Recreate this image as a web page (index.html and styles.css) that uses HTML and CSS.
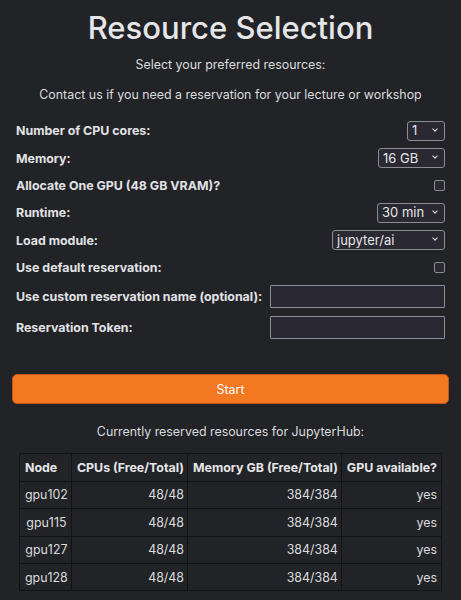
FILE: index.html
```html
<!DOCTYPE html>
<html>
<head>
<meta charset="utf-8">
<link rel="stylesheet" href="styles.css">
</head>
<body>
<div class="page">
  <h1 class="title">Resource Selection</h1>
  <p class="sub">Select your preferred resources:</p>
  <p class="sub contact">Contact us if you need a reservation for your lecture or workshop</p>
  <div class="form">
    <div class="row"><span class="label">Number of CPU cores:</span><span class="select w-cpu">1<span class="chev"></span></span></div>
    <div class="row"><span class="label">Memory:</span><span class="select w-mem">16 GB<span class="chev"></span></span></div>
    <div class="row"><span class="label">Allocate One GPU (48 GB VRAM)?</span><span class="check"></span></div>
    <div class="row"><span class="label">Runtime:</span><span class="select w-run">30 min<span class="chev"></span></span></div>
    <div class="row"><span class="label">Load module:</span><span class="select w-mod">jupyter/ai<span class="chev"></span></span></div>
    <div class="row"><span class="label">Use default reservation:</span><span class="check"></span></div>
    <div class="row tall"><span class="label">Use custom reservation name (optional):</span><span class="input"></span></div>
    <div class="row tall"><span class="label">Reservation Token:</span><span class="input"></span></div>
  </div>
  <div class="button">Start</div>
  <p class="sub reserved">Currently reserved resources for JupyterHub:</p>
  <table class="nodes">
    <thead>
      <tr><th>Node</th><th>CPUs (Free/Total)</th><th>Memory GB (Free/Total)</th><th>GPU available?</th></tr>
    </thead>
    <tbody>
      <tr><td>gpu102</td><td class="num">48/48</td><td class="num">384/384</td><td class="num">yes</td></tr>
      <tr><td>gpu115</td><td class="num">48/48</td><td class="num">384/384</td><td class="num">yes</td></tr>
      <tr><td>gpu127</td><td class="num">48/48</td><td class="num">384/384</td><td class="num">yes</td></tr>
      <tr><td>gpu128</td><td class="num">48/48</td><td class="num">384/384</td><td class="num">yes</td></tr>
    </tbody>
  </table>
</div>
</body>
</html>
```
FILE: styles.css
```css
html, body {
  margin: 0;
  padding: 0;
  background: #212327;
  color: #e4e4e6;
  font-family: Inter, "Noto Sans", sans-serif;
}
.page {
  padding: 0 12px;
}
.title {
  margin: 0;
  padding-top: 10px;
  text-align: center;
  font-size: 31px;
  font-weight: 500;
  line-height: 36px;
  color: #e6e6e8;
}
.sub {
  margin: 0;
  text-align: center;
  font-size: 12.4px;
  line-height: 16px;
  color: #dcdcde;
}
.title + .sub {
  margin-top: 11px;
}
.contact {
  margin-top: 14px;
}
.form {
  margin-top: 14px;
  padding: 0 4px;
  display: flex;
  flex-direction: column;
}
.row {
  display: flex;
  align-items: center;
  justify-content: space-between;
  height: 27.4px;
}
.row.tall {
  height: 30.5px;
}
.label {
  font-size: 12.4px;
  font-weight: 700;
  color: #e2e2e4;
  white-space: nowrap;
}
.select {
  box-sizing: border-box;
  height: 20px;
  border: 1.5px solid #8c8c92;
  border-radius: 3px;
  background: #2a2932;
  font-size: 13px;
  line-height: 17px;
  padding-left: 4px;
  display: flex;
  align-items: center;
  position: relative;
  color: #e6e6e8;
}
.chev {
  position: absolute;
  right: 7px;
  top: 5px;
  width: 3px;
  height: 3px;
  border-right: 1.5px solid #e0e0e0;
  border-bottom: 1.5px solid #e0e0e0;
  transform: rotate(45deg);
}
.w-cpu { width: 38px; }
.w-mem { width: 67px; }
.w-run { width: 68px; }
.w-mod { width: 113px; }
.check {
  box-sizing: border-box;
  width: 11px;
  height: 11px;
  border: 1.5px solid #8c8c92;
  border-radius: 2px;
  background: #2a2932;
}
.input {
  box-sizing: border-box;
  width: 175px;
  height: 23px;
  border: 1.5px solid #8c8c92;
  border-radius: 1px;
  background: #2a2833;
}
.button {
  margin-top: 32px;
  box-sizing: border-box;
  height: 30px;
  background: #f47722;
  border: 1px solid #c0561a;
  border-radius: 5px;
  color: #fff;
  font-size: 12.4px;
  display: flex;
  align-items: center;
  justify-content: center;
}
.reserved {
  margin-top: 20px;
}
.nodes {
  margin: 13px auto 0;
  border-collapse: collapse;
  font-size: 12.4px;
  color: #dcdcde;
}
.nodes th, .nodes td {
  border: 1.5px solid #121315;
  height: 26.4px;
  padding: 0 3.5px 0 4.5px;
  text-align: left;
  white-space: nowrap;
}
.nodes th {
  font-weight: 700;
  color: #e6e6e8;
}
.nodes td {
  text-align: center;
}
.nodes td.num {
  text-align: right;
}
```
